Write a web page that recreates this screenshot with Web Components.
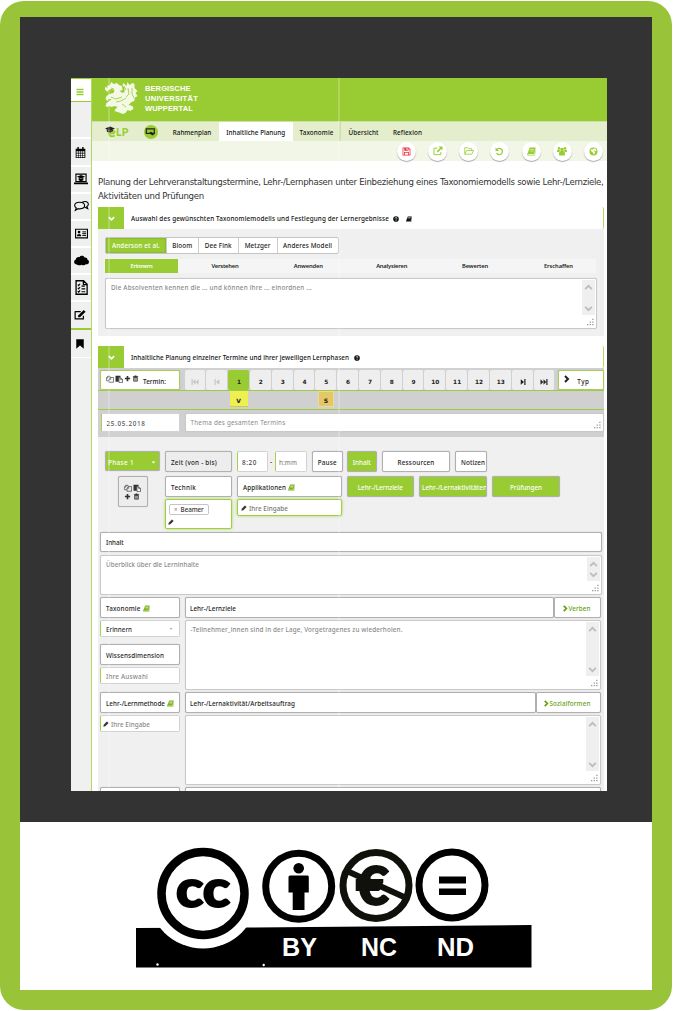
<!DOCTYPE html>
<html lang="de">
<head>
<meta charset="utf-8">
<title>eLP – Inhaltliche Planung</title>
<style>
html,body{margin:0;padding:0;background:#fff}
body{width:673px;height:1011px;overflow:hidden;font-family:"Noto Sans","Liberation Sans",sans-serif}
</style>
</head>
<body>
<poster-frame>
  <planner-app></planner-app>
  <license-badge slot="foot"></license-badge>
</poster-frame>
<script>
const define=(name,html,after)=>{
  const t=document.createElement('template');t.innerHTML=html;
  customElements.define(name,class extends HTMLElement{
    constructor(){super();this.attachShadow({mode:'open'}).append(t.content.cloneNode(true));}
    connectedCallback(){if(after)after.call(this,this.shadowRoot);}
  });
};

/* Icons, all on a 16-unit grid */
const S='fill="none" stroke="currentColor" ';
const ICONS={
menu:'<path d="M1 3h14M1 8h14M1 13h14" '+S+'stroke-width="2.800"/>',
calendar:'<path fill-rule="evenodd" d="M1 2.5h14V16H1zM2.2 6.2v2.3h2.6V6.200zM5.600 6.200v2.300h2.200V6.200zM8.600 6.200v2.300h2.200V6.200zM11.600 6.200v2.300h2.200V6.200zM2.200 9.300v2.200h2.600V9.300zM5.600 9.300v2.200h2.200V9.300zM8.600 9.300v2.200h2.200V9.300zM11.600 9.300v2.200h2.200V9.300zM2.200 12.300v2.500h2.600v-2.500zM5.600 12.300v2.500h2.200v-2.500zM8.600 12.300v2.500h2.200v-2.500zM11.600 12.300v2.500h2.200v-2.500z"/><path d="M4.500 0v4M11.500 0v4" '+S+'stroke-width="2"/>',
laptop:'<path d="M2.200 2.500h11.600v8.500H2.200z" '+S+'stroke-width="1.300"/><path d="M0 12h16v2H0zM8 3.300l4.700 2L8 7.300 3.300 5.300zM5.300 6.700L8 8l2.700-1.300v2.600L8 10.500 5.300 9.300z"/>',
chat:'<path d="M6 3.500c3 0 5.300 1.500 5.300 3.500S9 10.500 6 10.500c-.6 0-1.200 0-1.700-.2L1.500 12l.9-2.500C1.300 8.800.7 8 .7 7 .7 5 3 3.500 6 3.500zM9 3.200c3.500-1.400 6.300.2 6.300 2.300 0 1-.6 1.800-1.600 2.400l.9 2.300-3-1.500" '+S+'stroke-width="1.200"/>',
card:'<path d="M.7 2.700h14.600v10.600H.7z" '+S+'stroke-width="1.400"/><circle cx="5" cy="6.300" r="1.700"/><path d="M2.300 11.500c0-4 5.400-4 5.400 0z"/><path d="M9 6h4.500M9 8.200h4.500M9 10.400h4.500" '+S+'stroke-width="1.200"/>',
cloud:'<path d="M3.500 12.500C1 12.300 0 10.800.2 9.300.3 8 1 7.300 2 7c0-2 2-3.300 3.800-2.600C7 2.500 10.500 2.500 11.300 4.800c2-.3 3.200 1 3 2.400 1.200.5 1.900 1.500 1.600 2.800-.3 1.700-2 2.400-3.400 2-1 1.500-3.500 1.500-4.500.5-1.500 1-3.500.8-4.500 0z"/>',
list:'<path d="M2.200.8h8L14 4.500v10.700H2.200zM10 1v4h4" '+S+'stroke-width="1.400"/><path d="M4 5l1 1 1.500-2M4 8.500l1 1L6.500 7.500M4 12l1 1 1.500-2M8 6.500h3.500M8 9.500h4M8 12.500h4" '+S+'stroke-width="1.200"/>',
edit:'<path d="M12.500 9v4.200H1.500V3.500H9" '+S+'stroke-width="1.600" stroke-linejoin="round"/><path d="M5.500 8.500L13 1.200l2.400 2.400L8 11H5.500z"/>',
bookmark:'<path d="M2 .5h12V15.500L8 10.500l-6 5z"/>',
save:'<path fill-rule="evenodd" d="M1 1h11l3 3v11H1zM2.400 2.400v11.200h1.400V9h8.400v4.600h1.400V4.700l-2-2V6.500H4V2.400zM5.300 10.400v3.200h5.400v-3.200zM8 2.400v2.800h2V2.400z"/>',
share:'<path d="M12.500 9.500v4.300H1.500V3.500H7" '+S+'stroke-width="1.500"/><path d="M9 .8h6.200V7L13 4.900 7.800 10.200 6 8.400 11.200 3z"/>',
folder:'<path d="M1.200 12.500V2.700h4.500l1.200 1.600h5.500v2.900M1.200 13.200l3-6h11.200l-3 6z" '+S+'stroke-width="1.300" stroke-linejoin="round"/>',
undo:'<path d="M3.200 4.500a5.600 5.600 0 1 1-.4 6.300" '+S+'stroke-width="2.200"/><path d="M1 1v6h6z"/>',
book:'<path fill-rule="evenodd" d="M5 1h10.500L12.500 13H2.500c-.7 0-.7 1 0 1h10.700l2.300-9 .5.5L14 15.200H2C0 15.200.2 13 .7 12zM6 4l-.2 1h6.500l.3-1zM5.400 6.500l-.2 1h6.500l.3-1z"/>',
users:'<circle cx="8" cy="5.500" r="2.800"/><circle cx="3.200" cy="3.600" r="2"/><circle cx="12.800" cy="3.600" r="2"/><path d="M3.500 15c-1-7 2-7 4.500-7s5.500 0 4.500 7zM0 9.500c0-4 2-4 4-3.500L5 8 3 9.500zM16 9.500c0-4-2-4-4-3.500L11 8l2 1.500z"/>',
globe:'<path fill-rule="evenodd" d="M8 .8a7.200 7.200 0 1 0 0 14.400A7.200 7.200 0 0 0 8 .8zM9 2.400l3 1.300 1.500 3-2 .7-1-1.600L8.500 7l2.500 2-1 3-2 1.500-.5-3L5.300 8.300 2.800 6l1.500-2L7 4.500z"/>',
down:'<path d="M2 5l6 6 6-6" '+S+'stroke-width="4"/>',
chevU:'<path d="M2 11l6-6 6 6" '+S+'stroke-width="3.200"/>',
chevD:'<path d="M2 5l6 6 6-6" '+S+'stroke-width="3.200"/>',
right:'<path d="M4 2l6 6-6 6" '+S+'stroke-width="4"/>',
help:'<circle cx="8" cy="8" r="7.500"/><path d="M5.500 6.300C5.700 3.200 10.500 3.300 10.500 6c0 1.700-2.400 1.800-2.400 3.500M8.100 11v2" fill="none" stroke="#fff" stroke-width="1.900"/>',
copy:'<path d="M.8 6l3-3.500H8V5M.8 6v5.500H6M6 8.500l3-3.500h6v9.500H6zM6 8.500h3.500V5M.8 6H4V2.500" '+S+'stroke-width="1.200"/>',
paste:'<path d="M1 1.500h10v3.500H7.500v8.500H1z"/><path d="M8 5.700h4l3 3v6.500H8zM11.500 6v3.300H15" fill="#fff" stroke="currentColor" stroke-width="1.300"/>',
plus:'<path d="M8 2v12M2 8h12" '+S+'stroke-width="3.800"/>',
trash:'<path fill-rule="evenodd" d="M2 3h3.500L6 1.200h4l.5 1.800H14v1.600h-1V15H3V4.600H2zM5 6v7.200h1.200V6zM7.400 6v7.200h1.200V6zM9.800 6v7.200H11V6z"/>',
pencil:'<path d="M1 15l1-5L10.500 1l4.500 4.500L6 14z"/>',
first:'<path d="M1 2h2.400v12H1zM9 2.500v11L3.500 8zM15 2.500v11L9.500 8z"/>',
prev:'<path d="M3 2h2.400v12H3zM12.500 2.500v11L6 8z"/>',
next:'<path d="M13 2h-2.400v12H13zM3.500 2.500v11L10 8z"/>',
last:'<path d="M15 2h-2.400v12H15zM7 2.500v11L12.500 8zM1 2.500v11L6.500 8z"/>',
caret:'<path d="M2 5h12L8 11z"/>'
};
define('ui-icon','<style>:host{display:inline-block;width:var(--s,9px);height:var(--s,9px);flex:none}svg{display:block;width:100%;height:100%}</style><svg viewBox="0 0 16 16" fill="currentColor"></svg>',function(r){
  this.style.setProperty('--s',(this.getAttribute('size')||9)+'px');
  r.querySelector('svg').innerHTML=ICONS[this.getAttribute('name')];
});

/* Single text line, tracked so that it fills a given measure */
define('fit-text','<style>:host{display:inline-block;white-space:nowrap;flex:none}span{display:inline-block}</style><span><slot></slot></span>',function(r){
  const w=+this.getAttribute('w'),s=r.querySelector('span'),n=this.textContent.length;
  if(!w)return;
  s.style.letterSpacing=((w-s.getBoundingClientRect().width)/n)+'px';
  this.style.width=w+'px';
});

/* Bordered cell */
define('ui-box',`<style>
:host{display:flex;align-items:center;box-sizing:border-box;flex:none;width:calc(var(--w)*1px);height:calc(var(--h,20.5)*1px);padding:1.500px 0 0 calc(var(--p,5)*1px);background:#fff;border:1px solid #b0b0b0;border-radius:2px;box-shadow:0 0 1px #aaa;white-space:nowrap;overflow:hidden}
:host([k~=green]){background:#9c3;color:#fff}
:host([k~=gray]){background:#ededed}
:host([k~=field]){border-color:#d2d2d2;border-left-color:#a6d052;box-shadow:none;color:#888}
:host([k~=glow]){border-color:#a0cf40;box-shadow:0 0 3px #a9d45a;color:#777}
:host([k~=center]){justify-content:center;padding-left:0}
</style><slot></slot>`,function(){
  for(const a of ['w','h','p'])if(this.hasAttribute(a))this.style.setProperty('--'+a,this.getAttribute(a));
});

/* Text area with scroll bar and resize grip */
define('text-area',`<style>
:host{display:flex;box-sizing:border-box;flex:none;justify-content:space-between;width:calc(var(--w)*1px);height:calc(var(--h)*1px);background:#fff;border:1px solid #c9c9c9;border-radius:2px;box-shadow:0 0 1px #ccc;color:#8a8a8a;padding:1px 1px 1px 5px}
.t{padding-top:3px;line-height:10px}
.side{width:13px;display:flex;flex-direction:column}
.bar{flex:1;background:#efefef;display:flex;flex-direction:column;justify-content:space-between;align-items:center;padding:3px 0 2px;color:#bdbdbd}
.grip{height:12px;display:flex;justify-content:flex-end;align-items:flex-end}
svg{width:9px;height:9px}
:host([flat]) .bar{visibility:hidden;flex:1;padding:0}:host([flat]) .bar ui-icon{display:none}
</style><div class="t"><slot></slot></div><div class="side"><div class="bar"><ui-icon name="chevU" size="9"></ui-icon><ui-icon name="chevD" size="9"></ui-icon></div><div class="grip"><svg viewBox="0 0 9 9" fill="#999"><path d="M1 6h1.300v1.300H1zM3.600 6h1.300v1.300H3.600zM6.200 6h1.300v1.300H6.200zM3.600 3.400h1.300v1.300H3.600zM6.200 3.400h1.300v1.300H6.200zM6.200.8h1.300v1.300H6.200z"/></svg></div></div>`,function(){
  for(const a of ['w','h'])this.style.setProperty('--'+a,this.getAttribute(a));
});

define('poster-frame',`<style>
:host{display:flex;flex-direction:column;box-sizing:border-box;width:672px;height:1009.500px;margin-top:.7px;padding:16.300px 20px 20px;border-radius:24px;background:#99c439}
.stage{background:#333;height:805px;flex:none;box-sizing:border-box;padding:61px 0 0 51px}
.foot{background:#fff;height:168px}
</style><div class="stage"><slot></slot></div><div class="foot"><slot name="foot"></slot></div>`);

define('side-rail',`<style>
:host{display:flex;flex-direction:column;width:20px;flex:none;background:#f0f0f0;border-right:1px solid #b3d867;color:#000}
div{box-sizing:border-box;display:flex;align-items:center;justify-content:center;height:27.100px;border-bottom:2px solid #fff;flex:none;padding-right:0}
.m{height:24px;background:#fff;border-top:1px solid #9c3;border-bottom:1px solid #9c3;color:#9c3;padding:4px 2px 0 0}
.g{height:37.500px}
.e{padding-right:2px}
.last{border-bottom:2px solid #9c3;height:28px}
.bm{border-bottom-width:1px;height:28px}
</style><div class="m"><ui-icon name="menu" size="8"></ui-icon></div><div class="g"></div>
<div class="e"><ui-icon name="calendar" size="11"></ui-icon></div><div><ui-icon name="laptop" size="14"></ui-icon></div><div><ui-icon name="chat" size="15"></ui-icon></div><div><ui-icon name="card" size="13"></ui-icon></div><div><ui-icon name="cloud" size="15"></ui-icon></div><div><ui-icon name="list" size="15"></ui-icon></div><div class="last e"><ui-icon name="edit" size="12"></ui-icon></div><div class="bm e"><ui-icon name="bookmark" size="10"></ui-icon></div>`);

define('uni-header',`<style>
:host{display:flex;height:43.300px;background:#9c3;color:#fff;flex:none;padding-left:12px;box-sizing:border-box;font:bold 7.500px/10.300px "Liberation Sans",sans-serif}
svg{width:35px;height:36px;margin-top:3px}
.n{display:flex;flex-direction:column;padding:5.800px 0 0 6px}
</style><svg viewBox="0 0 35 36" fill="#f4f9e6"><path d="M3 5l3-1 1-3 3 2 3-1 2 2 3 1 .5 4-3 1 3 2 2-1V7l-2-3 1-2 3 3 1-4 2 3 3-2 2 1v4l3 3-2 2 2 3-3 2v3l-3 1-3 3 4 1 1 3-2 1-1 1-3-1-2 3-3 1-2-1-3-1-3-1 1-2 2-2-3-1-3 1-2-1-2 1-2-1 1-3 3-2 2-2-3 0-1 2-2-2 1-3 3-2 4-1 1-3-3-1-3 1-1 2-2-2H1l0-3 3 1-2-3z"/><path d="M24 7l1 6-3 3M28 7l0 6 2 4M7 16l5 2 6-2M12 21l5-1 5-3M7 7l3 1M18 23l4 3M20 5l2 4" stroke="#9c3" stroke-width=".8" fill="none"/></svg>
<div class="n"><fit-text w="45.500">BERGISCHE</fit-text><fit-text w="53">UNIVERSITÄT</fit-text><fit-text w="48">WUPPERTAL</fit-text></div>`);

define('main-nav',`<style>
:host{display:flex;height:19.500px;background:#e4edcc;flex:none;box-sizing:border-box;border-top:1px solid #cfe0a4;font-weight:500;color:#111}
span{box-sizing:border-box;display:flex;align-items:center;justify-content:center;padding-top:1px;flex:none}
.on{background:#fff}
.logo{width:46px;padding:0 0 0 13px;color:#9c3;font:900 10.500px Lato,sans-serif;justify-content:flex-start}
.scr{width:25px;padding:0}.scr i{width:14px;height:14px;border-radius:50%;background:#9c3;display:flex;align-items:center;justify-content:center}
svg{display:block}
.d{border-right:2px solid #cfe0a4}
</style><span class="logo"><svg width="11" height="11" viewBox="0 0 11 11"><path d="M10 6.800a3 3 0 1 0-.6 2.600M4.500 7.300h5" stroke="#9c3" stroke-width="1.900" fill="none"/><path d="M0 2.500L5 .5l5 2-5 2.500z" fill="#222"/><path d="M1.500 3.500L5 5l3-1.500v1.800L5 6.500 2 6z" fill="#333"/></svg><fit-text w="12.500">LP</fit-text></span>
<span class="scr"><i><svg width="11" height="8" viewBox="0 0 10 8"><path d="M.8.8h8v4.500h-8z" fill="none" stroke="#222" stroke-width="1.200"/><path d="M5 3.500l4 2.500-2 1.500-3-2z" fill="#222"/></svg></i></span>
<span style="width:56px;padding-left:2px"><fit-text w="38.500">Rahmenplan</fit-text></span><span class="on" style="width:73.500px"><fit-text w="59">Inhaltliche Planung</fit-text></span><span class="d" style="width:48px;padding-left:2px"><fit-text w="34">Taxonomie</fit-text></span><span style="width:46px"><fit-text w="30">Übersicht</fit-text></span><span style="width:42px"><fit-text w="29">Reflexion</fit-text></span>`);

define('action-bar',`<style>
:host{display:flex;justify-content:flex-end;gap:12.200px;height:20.700px;background:#f2f6e6;flex:none;color:#9c3;padding:1px 4px 0 0;box-sizing:border-box}
i{width:19px;height:19px;border-radius:50%;background:#fff;display:flex;align-items:center;justify-content:center;box-shadow:0 1px 1px #aaa}
</style><i style="color:#f03040"><ui-icon name="save"></ui-icon></i><i><ui-icon name="share" size="10"></ui-icon></i><i><ui-icon name="folder" size="10"></ui-icon></i><i><ui-icon name="undo"></ui-icon></i><i><ui-icon name="book"></ui-icon></i><i><ui-icon name="users" size="10"></ui-icon></i><i><ui-icon name="globe"></ui-icon></i>`);

define('panel-head',`<style>
:host{display:flex;height:22px;width:506px;align-items:stretch;background:#fff;box-sizing:border-box;border-right:1px solid #b3d867;border-radius:2px;color:#111;font-weight:500;flex:none}
b{width:26px;background:#9c3;color:#fff;display:flex;align-items:center;justify-content:center}
div{display:flex;align-items:center;gap:6px;padding:1px 0 0 7px}
</style><b><ui-icon name="down" size="7"></ui-icon></b><div><slot></slot></div>`);

define('taxonomy-panel',`<style>
:host{display:block;background:#f0f0f0;width:506px;height:107px;box-sizing:border-box;padding:8px 0 0 7px}
.tabs{display:flex;height:16.500px;width:233.500px;box-sizing:border-box;border:1px solid #c4c4c4;border-radius:2px;background:#fff;color:#222}
.tabs span{display:flex;align-items:center;justify-content:center;border-left:1px solid #ccc;box-sizing:border-box}
.tabs .on{background:#9c3;color:#fff;border:0;box-shadow:inset 0 0 2px #6d9a1c}
.lv{display:flex;gap:10.400px;background:#f5f5f5;width:491px;height:14px;margin:5.500px 0 5px;font-size:5.800px;font-weight:600;color:#222}
.lv span{width:73px;flex:none;display:flex;align-items:center;justify-content:center;padding-top:1px;box-sizing:border-box}
.lv .on{background:#9c3;color:#fff}
</style><div class="tabs"><span class="on" style="width:60px"><fit-text w="48">Anderson et al.</fit-text></span><span style="width:32px"><fit-text w="20">Bloom</fit-text></span><span style="width:40px"><fit-text w="27">Dee Fink</fit-text></span><span style="width:39px"><fit-text w="26">Metzger</fit-text></span><span style="width:61px"><fit-text w="49">Anderes Modell</fit-text></span></div>
<div class="lv"><span class="on"><fit-text w="22">Erinnern</fit-text></span><span><fit-text w="27">Verstehen</fit-text></span><span><fit-text w="29">Anwenden</fit-text></span><span><fit-text w="31">Analysieren</fit-text></span><span><fit-text w="26">Bewerten</fit-text></span><span><fit-text w="29">Erschaffen</fit-text></span></div>
<text-area w="492" h="50.500"><fit-text w="201">Die Absolventen kennen die ... und können ihre ... einordnen ...</fit-text></text-area>`);

define('date-pager',`<style>
:host{display:block;background:#d0d0d0;width:506px;height:69px;box-sizing:border-box;padding-top:1.500px;font-weight:500}
.r{display:flex}
.a{padding-left:2px;height:20px;border-bottom:1px solid #9fcb40}
.a ui-box{border-color:#a9cf57}
.c{display:flex;margin:0 3px 0 5px;width:371px}
.c span{box-sizing:border-box;width:21.820px;background:#eee;border-right:1px solid #d0d0d0;border-radius:2px;display:flex;align-items:center;justify-content:center;padding:3.500px 0 0 1px;color:#222;font:bold 5.800px "DejaVu Sans",sans-serif}
.c .off{color:#c4c4c4}.c .on{background:#9c3}
.b{height:19px;box-sizing:border-box;box-shadow:inset 0 -1px #9fcb40;font-family:"DejaVu Sans",sans-serif;font-size:6px;font-weight:bold}
.b span{width:18px;height:16.500px;background:#eef052;display:flex;align-items:center;justify-content:center;margin-left:131.500px;box-sizing:border-box;border-bottom:1px solid #c8d040;padding-top:3px}
.b .s{width:16px;background:#e5c866;border:1px solid #edd99a;margin-left:70.500px;padding:2px 0 0}
.d{padding:3.500px 0 0 2.500px;gap:5px}
.ic{display:flex;gap:1px;margin-right:6px;color:#333;padding-bottom:3px}
</style><div class="r a"><ui-box w="79.500" h="20" p="5"><span class="ic"><ui-icon name="copy" size="8"></ui-icon><ui-icon name="paste" size="8"></ui-icon><ui-icon name="plus" size="7"></ui-icon><ui-icon name="trash" size="7"></ui-icon></span><fit-text w="23" style="margin-left:-2px;padding-top:2px">Termin:</fit-text></ui-box><div class="c"></div><ui-box w="46" h="20" p="4"><ui-icon name="right" size="8" style="margin:0 6px 4px 0"></ui-icon><fit-text w="12" style="padding-top:2px">Typ</fit-text></ui-box></div>
<div class="r b"><span>V</span><span class="s">S</span></div>
<div class="r d"><ui-box k="field" w="79" h="18.500" style="color:#555;font-weight:500"><fit-text w="39">25.05.2018</fit-text></ui-box><text-area flat w="419.500" h="18.500"><fit-text w="95" style="font-weight:400">Thema des gesamten Termins</fit-text></text-area></div>`,function(r){
  const c=r.querySelector('.c');
  const ic=(n,k='')=>`<span class="${k}"><ui-icon name="${n}" size="8"></ui-icon></span>`;
  let h=ic('first','off')+ic('prev','off');
  for(let i=1;i<14;i++)h+=`<span class="${i===1?'on':''}">${i}</span>`;
  c.innerHTML=h+ic('next')+ic('last');
});

define('phase-toolbar',`<style>
:host{display:grid;grid-template-columns:60px 72px 109.500px 1fr;grid-template-rows:24.500px 56.500px;padding:14px 0 0 7px;width:506px;height:94.500px;box-sizing:border-box}
.r{display:flex;gap:5px}.c{display:flex;flex-direction:column;gap:2px;align-items:flex-start}
.four{display:grid;grid-template-columns:8px 8px;gap:1px 1px;color:#333;justify-content:center}
.tag{display:flex;align-items:center;border:1px solid #c5c5c5;border-radius:2px;height:9px;padding:0 4px;gap:3px;color:#333;margin:0 0 0 1px}
</style>
<ui-box k="green" w="55" h="20" p="2"><fit-text w="26" style="margin-right:17px">Phase 1</fit-text><ui-icon name="caret" size="5"></ui-icon></ui-box>
<ui-box k="gray" w="67"><fit-text w="46">Zeit (von - bis)</fit-text></ui-box>
<div class="r" style="gap:2px"><ui-box k="field" w="31" p="4" style="color:#444"><fit-text w="15">8:20</fit-text></ui-box><span style="padding-top:6px;width:3px">-</span><ui-box k="field" w="31.500" p="3"><fit-text w="18">h:mm</fit-text></ui-box><ui-box w="30.500" p="0" k="center" style="margin-left:3.500px"><fit-text w="19">Pause</fit-text></ui-box></div>
<div class="r"><ui-box k="green center" w="30.500"><fit-text w="18">Inhalt</fit-text></ui-box><ui-box k="center" w="68"><fit-text w="37">Ressourcen</fit-text></ui-box><ui-box w="32"><fit-text w="24">Notizen</fit-text></ui-box></div>
<div style="padding-left:13px"><ui-box k="gray center" w="29.500" h="31"><div class="four"><ui-icon name="copy" size="8"></ui-icon><ui-icon name="paste" size="8"></ui-icon><ui-icon name="plus" size="7"></ui-icon><ui-icon name="trash" size="7"></ui-icon></div></ui-box></div>
<div class="c"><ui-box w="67" h="21"><fit-text w="25">Technik</fit-text></ui-box><ui-box k="glow" w="67" h="30.500" p="2"><div class="c" style="gap:4px"><span class="tag"><span style="color:#888">×</span><fit-text w="23">Beamer</fit-text></span><ui-icon name="pencil" size="6" style="color:#333"></ui-icon></div></ui-box></div>
<div class="c"><ui-box w="104.500" h="21"><fit-text w="43" style="margin-right:2px">Applikationen</fit-text><ui-icon name="book" size="7" style="color:#7eb51c"></ui-icon></ui-box><ui-box k="glow" w="104.500" h="17" p="3"><ui-icon name="pencil" size="6" style="color:#333;margin-right:2px"></ui-icon><fit-text w="39">Ihre Eingabe</fit-text></ui-box></div>
<div class="r"><ui-box k="green center" w="67.500" h="21"><fit-text w="45">Lehr-/Lernziele</fit-text></ui-box><ui-box k="green" w="68" h="21" p="2"><fit-text w="65">Lehr-/Lernaktivitäten</fit-text></ui-box><ui-box k="green center" w="68" h="21"><fit-text w="32">Prüfungen</fit-text></ui-box></div>`);

define('phase-form',`<style>
:host{display:flex;flex-direction:column;padding-left:2px;width:506px;box-sizing:border-box}
.r{display:flex;gap:5px;height:95px}.l,.m{display:flex;flex-direction:column;gap:2.500px}
.h{display:flex}
.btn{color:#6a9f10}
</style>
<ui-box w="501.500" h="20.500"><fit-text w="17.500">Inhalt</fit-text></ui-box>
<text-area w="501.500" h="40" style="margin:2.500px 0 2.500px"><fit-text w="93">Überblick über die Lerninhalte</fit-text></text-area>
<div class="r"><div class="l"><ui-box w="79.500"><fit-text w="34.500" style="margin-right:2px">Taxonomie</fit-text><ui-icon name="book" size="7" style="color:#7eb51c"></ui-icon></ui-box><ui-box k="field" w="79.500" h="16.500" style="color:#333"><fit-text w="26" style="margin-right:37px">Erinnern</fit-text><ui-icon name="caret" size="4" style="color:#999"></ui-icon></ui-box><ui-box w="79.500" style="margin-top:5px"><fit-text w="58">Wissensdimension</fit-text></ui-box><ui-box k="field" w="79.500" h="16.500"><fit-text w="42">Ihre Auswahl</fit-text></ui-box></div>
<div class="m"><div class="h"><ui-box w="369.500" p="4.500"><fit-text w="46">Lehr-/Lernziele</fit-text></ui-box><ui-box class="btn" w="47" p="7" style="margin-left:-.5px"><ui-icon name="right" size="7"></ui-icon><fit-text w="22">Verben</fit-text></ui-box></div><text-area w="416.500" h="69.500"><fit-text w="212">-Teilnehmer_innen sind in der Lage, Vorgetragenes zu wiederholen.</fit-text></text-area></div></div>
<div class="r"><div class="l"><ui-box w="79.500"><fit-text w="59" style="margin-right:2px">Lehr-/Lernmethode</fit-text><ui-icon name="book" size="7" style="color:#7eb51c"></ui-icon></ui-box><ui-box k="field" w="79.500" h="16.500" p="2"><ui-icon name="pencil" size="6" style="color:#333;margin-right:2px"></ui-icon><fit-text w="39">Ihre Eingabe</fit-text></ui-box></div>
<div class="m"><div class="h"><ui-box w="351.500" p="4.500"><fit-text w="105">Lehr-/Lernaktivität/Arbeitsauftrag</fit-text></ui-box><ui-box class="btn" w="65" p="6" style="margin-left:-.5px"><ui-icon name="right" size="7"></ui-icon><fit-text w="41">Sozialformen</fit-text></ui-box></div><text-area w="416.500" h="69.500"></text-area></div></div>
<div class="r"><ui-box w="79.500"></ui-box><ui-box w="416.500"></ui-box></div>`);

define('planner-app',`<style>
:host{display:flex;position:relative;width:536px;height:712.700px;overflow:hidden;background:#fff;font-size:6.300px;line-height:9px;font-weight:500;color:#222}
main{flex:1;min-width:0;display:flex;flex-direction:column}
.body{padding-left:6px;display:flex;flex-direction:column;align-items:flex-start}
.intro{font-family:"DejaVu Sans",sans-serif;font-size:8.600px;line-height:14px;color:#333;font-weight:400;display:flex;flex-direction:column;margin:13.500px 0 4.500px;height:28px}
.phase{background:#f0f0f0}
.seam{position:absolute;top:0;bottom:0;width:2px;background:#fff;opacity:.2}
</style><side-rail></side-rail><main><uni-header></uni-header><main-nav></main-nav><action-bar></action-bar>
<div class="body"><div class="intro"><fit-text w="505.500">Planung der Lehrveranstaltungstermine, Lehr-/Lernphasen unter Einbeziehung eines Taxonomiemodells sowie Lehr-/Lernziele,</fit-text><fit-text w="106">Aktivitäten und Prüfungen</fit-text></div>
<panel-head><fit-text w="258">Auswahl des gewünschten Taxonomiemodells und Festlegung der Lernergebnisse</fit-text><ui-icon name="help" size="6" style="margin-left:-2px"></ui-icon><ui-icon name="book" size="6" style="margin-left:1px"></ui-icon></panel-head>
<taxonomy-panel></taxonomy-panel>
<panel-head style="margin-top:10px"><fit-text w="218">Inhaltliche Planung einzelner Termine und ihrer jeweiligen Lernphasen</fit-text><ui-icon name="help" size="6" style="margin-left:-1px"></ui-icon></panel-head>
<date-pager></date-pager>
<div class="phase"><phase-toolbar></phase-toolbar><phase-form></phase-form></div></div></main>
<div class="seam" style="left:37px"></div><div class="seam" style="left:267px"></div>`);

define('license-badge',`<style>:host{display:block;width:632px;height:168px}svg{display:block}</style>
<svg width="632" height="168" viewBox="20 822 632 168"><path d="M136 928L248 927.500 531.500 925v42.500H136z"/><circle cx="203" cy="893.500" r="55" fill="#fff"/>
<g fill="#fff" stroke="#000"><circle cx="203" cy="893.500" r="41.500" stroke-width="8.500"/><circle cx="298.700" cy="886.300" r="33" stroke-width="7"/><circle cx="376" cy="885.500" r="33" stroke="#11110c" stroke-width="7"/><circle cx="452" cy="885" r="33" stroke-width="7"/></g>
<text x="176" y="906.500" font-family="Lato" font-weight="900" font-size="52" textLength="54" lengthAdjust="spacingAndGlyphs" stroke="#000" stroke-width="2">cc</text>
<circle cx="298.700" cy="868.300" r="5.300"/><path d="M290 875.500h17.500q1.300 0 1.300 1.500v15.500h-4.300V910h-11.800v-17.500h-4.200V877q0-1.500 1.500-1.500z"/>
<text x="356" y="905" font-family="Lato" font-weight="900" font-size="53" textLength="33" lengthAdjust="spacingAndGlyphs" fill="#11110c" stroke="#11110c" stroke-width="2">€</text><path d="M347 871l57 26" stroke="#11110c" stroke-width="6"/>
<path d="M439 876.500h27v7h-27zM439 888.500h27v6.500h-27z"/>
<g fill="#fff" font-family="Liberation Sans" font-weight="bold" font-size="26.500"><text x="282" y="955.500" textLength="35" lengthAdjust="spacingAndGlyphs">BY</text><text x="361" y="955.500" textLength="36" lengthAdjust="spacingAndGlyphs">NC</text><text x="437" y="955.500" textLength="37" lengthAdjust="spacingAndGlyphs">ND</text></g>
<circle cx="157.500" cy="964.500" r="1.200" fill="#fff"/><circle cx="263.700" cy="965" r="1.200" fill="#fff"/></svg>`);
</script>
</body>
</html>
